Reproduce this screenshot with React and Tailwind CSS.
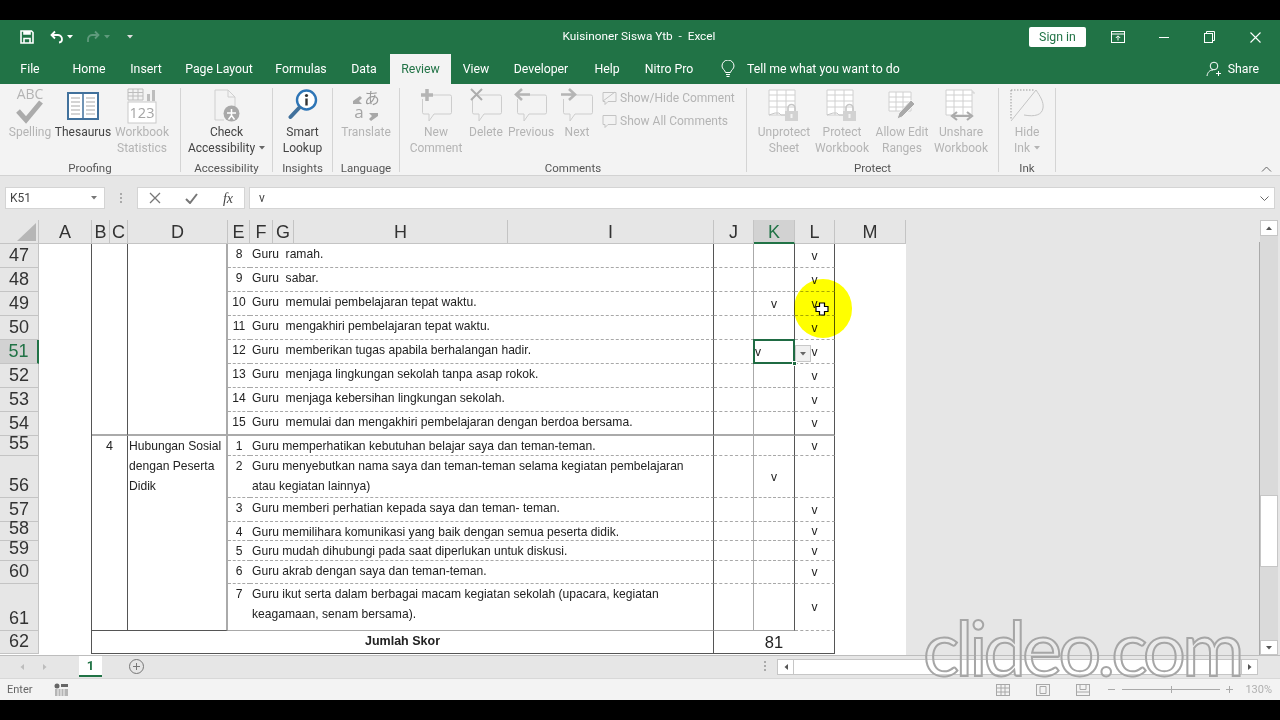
import React from "react";

const ribbonTabs = [
  { label: "File", w: "w-[60px]" },
  { label: "Home", w: "w-[58px]" },
  { label: "Insert", w: "w-[56px]" },
  { label: "Page Layout", w: "w-[90px]" },
  { label: "Formulas", w: "w-[74px]" },
  { label: "Data", w: "w-[52px]" },
  { label: "Review", w: "w-[61px]", active: true },
  { label: "View", w: "w-[50px]" },
  { label: "Developer", w: "w-[80px]" },
  { label: "Help", w: "w-[52px]" },
  { label: "Nitro Pro", w: "w-[72px]" },
];

const columns = [
  { label: "A" },
  { label: "B" },
  { label: "C" },
  { label: "D" },
  { label: "E" },
  { label: "F" },
  { label: "G" },
  { label: "H" },
  { label: "I" },
  { label: "J" },
  { label: "K", active: true },
  { label: "L" },
  { label: "M" },
];

const rows = [
  { n: 47, no: "8", text: "Guru  ramah.", l: true },
  { n: 48, no: "9", text: "Guru  sabar.", l: true },
  { n: 49, no: "10", text: "Guru  memulai pembelajaran tepat waktu.", k: true, l: true },
  { n: 50, no: "11", text: "Guru  mengakhiri pembelajaran tepat waktu.", l: true },
  { n: 51, no: "12", text: "Guru  memberikan tugas apabila berhalangan hadir.", l: true, selected: true },
  { n: 52, no: "13", text: "Guru  menjaga lingkungan sekolah tanpa asap rokok.", l: true },
  { n: 53, no: "14", text: "Guru  menjaga kebersihan lingkungan sekolah.", l: true },
  { n: 54, no: "15", text: "Guru  memulai dan mengakhiri pembelajaran dengan berdoa bersama.", l: true, groupEnd: true },
  { n: 55, no: "1", text: "Guru memperhatikan kebutuhan belajar saya dan teman-teman.", l: true },
  { n: 56, no: "2", text: "Guru menyebutkan nama saya dan teman-teman selama kegiatan pembelajaran\natau kegiatan lainnya)", k: true },
  { n: 57, no: "3", text: "Guru memberi perhatian kepada saya dan teman- teman.", l: true },
  { n: 58, no: "4", text: "Guru memilihara komunikasi yang baik dengan semua peserta didik.", l: true },
  { n: 59, no: "5", text: "Guru mudah dihubungi pada saat diperlukan untuk diskusi.", l: true },
  { n: 60, no: "6", text: "Guru akrab dengan saya dan teman-teman.", l: true },
  { n: 61, no: "7", text: "Guru ikut serta dalam berbagai macam kegiatan sekolah (upacara, kegiatan\nkeagamaan, senam bersama).", l: true, last: true },
];

// ---- small drawings ----
function SaveIcon() {
  return (
    <svg width="14" height="14" viewBox="0 0 14 14" fill="none" stroke="white" strokeWidth="1.6">
      <path d="M1 1h10.5L13 2.5V13H1z" />
      <path d="M4 13V8.5h6V13" />
      <path d="M4 1v3h6V1" fill="white" />
    </svg>
  );
}

function UndoIcon({ dim }) {
  return (
    <svg width="16" height="14" viewBox="0 0 16 14" fill="none" stroke={dim ? "#5f9a7c" : "white"} strokeWidth="1.8">
      {dim ? (
        <path d="M10 1.5l3.5 3.5L10 8.5M13 5H7a4.2 4.2 0 0 0-4 4.5V12" />
      ) : (
        <path d="M6 1.5L2.5 5 6 8.5M3 5h6a4.2 4.2 0 0 1 4 4.5c0 1.5-1.2 2.8-3 3" />
      )}
    </svg>
  );
}

function Caret({ color = "#ffffff" }) {
  return (
    <svg width="6" height="4" viewBox="0 0 6 4">
      <path d="M0 0h6L3 3.5z" fill={color} />
    </svg>
  );
}

function SpellingIcon() {
  return (
    <svg width="36" height="46" viewBox="0 -4 36 46" fill="none">
      <text x="18" y="12" textAnchor="middle" fontSize="14" fill="#b4b4b4" fontFamily="Open Sans, sans-serif">ABC</text>
      <path d="M6 24l8 9L29 15" stroke="#ababab" strokeWidth="5" />
    </svg>
  );
}

function ThesaurusIcon() {
  return (
    <svg width="32" height="28" viewBox="0 0 32 28" fill="none">
      <rect x="1" y="1" width="30" height="26" fill="#fff" stroke="#41719c" strokeWidth="2" />
      <path d="M16 1v26" stroke="#41719c" strokeWidth="1.5" />
      <path d="M4 6h9M4 10h9M4 14h9M4 18h9M4 22h9M19 6h9M19 10h9M19 14h9M19 18h9M19 22h9" stroke="#a9a9a9" />
    </svg>
  );
}

function StatsIcon() {
  return (
    <svg width="30" height="36" viewBox="0 0 30 36" fill="none">
      <path d="M1 1h15v11H1zM1 4.5h15M1 8h15M6 1v11M11 1v11" stroke="#bdbdbd" />
      <path d="M20 6h3v7h-3zM25 2h3v11h-3z" fill="#bdbdbd" />
      <rect x="1" y="14" width="28" height="21" fill="#fff" stroke="#c9c9c9" />
      <text x="15" y="30" textAnchor="middle" fontSize="14.5" fill="#a5a5a5" fontFamily="Open Sans, sans-serif">123</text>
    </svg>
  );
}

function CheckDocIcon() {
  return (
    <svg width="26" height="34" viewBox="0 0 26 34" fill="none">
      <path d="M1 1h13l7 7v10M14 1v7h7M1 1v30h9" stroke="#cfcfcf" />
      <circle cx="17.5" cy="24.5" r="8" fill="#a9a9a9" />
      <path d="M17.5 20v6.5M13 24h9M17.5 26.5l-3 4M17.5 26.5l3 4" stroke="#fff" strokeWidth="1.5" />
    </svg>
  );
}

function LookupIcon() {
  return (
    <svg width="30" height="36" viewBox="0 0 30 36" fill="none">
      <circle cx="18.5" cy="12" r="9.5" fill="#fff" stroke="#2e75b6" strokeWidth="2.4" />
      <path d="M11 20L2.5 29" stroke="#41719c" strokeWidth="4" strokeLinecap="round" />
      <circle cx="18.5" cy="7.5" r="1.6" fill="#333" />
      <path d="M18.5 10.5v7" stroke="#333" strokeWidth="2.4" />
    </svg>
  );
}

function TranslateIcon() {
  return (
    <svg width="30" height="46" viewBox="0 -6 30 46" fill="none">
      <path d="M2 12l7-5 2 2-3 3 3 3H2z" fill="#a8a8a8" />
      <text x="21" y="15" textAnchor="middle" fontSize="15.5" fill="#9c9c9c" fontFamily="Noto Sans CJK JP, sans-serif">あ</text>
      <text x="8" y="29" textAnchor="middle" fontSize="17" fill="#a5a5a5" fontFamily="Open Sans, sans-serif">a</text>
      <path d="M27 27l-7 5-2-2 3-3-3-3h9z" fill="#a8a8a8" />
    </svg>
  );
}

function BubbleIcon({ mark }) {
  return (
    <svg width="34" height="36" viewBox="0 0 34 36" fill="none">
      <path d="M8 7h23a1.5 1.5 0 0 1 1.5 1.5v16A1.5 1.5 0 0 1 31 26H15l-5 7v-7H5a1.5 1.5 0 0 1-1.5-1.5V11" stroke="#cdcdcd" />
      {mark === "new" && <path d="M8 1v12M2 7h12" stroke="#b5b5b5" strokeWidth="3.5" />}
      {mark === "delete" && <path d="M2 1l11 11M13 1L2 12" stroke="#adadad" strokeWidth="2" />}
      {mark === "prev" && <path d="M8 1L2 6.5 8 12M3 6.5h13" stroke="#b5b5b5" strokeWidth="2.6" />}
      {mark === "next" && <path d="M9 1l6 5.5L9 12M14 6.5H1" stroke="#b5b5b5" strokeWidth="2.6" />}
    </svg>
  );
}

function SmallBubble({ slash }) {
  return (
    <svg width="15" height="15" viewBox="0 0 15 15" fill="none">
      <path d="M1 1.5h13v9H6l-3 3v-3H1z" stroke="#c4c4c4" />
      {slash && <path d="M1 10L13 1" stroke="#c4c4c4" />}
    </svg>
  );
}

function SheetGrid({ small }) {
  return (
    <g stroke="#d0d0d0">
      <path d={small ? "M1 1h22v19H1z" : "M1 1h26v25H1z"} fill="#fff" />
      <path d={small ? "M1 6h22M1 11h22M1 16h22M8 1v19M15 1v19" : "M1 6h26M1 12h26M1 18h26M9 1v25M18 1v25"} />
    </g>
  );
}

function LockIcon({ x, y }) {
  return (
    <g transform={`translate(${x} ${y})`}>
      <path d="M3 7V4a3.5 3.5 0 0 1 7 0v3" stroke="#c6c6c6" strokeWidth="1.6" fill="none" />
      <rect x="0" y="7" width="13" height="10" fill="#d2d2d2" />
      <rect x="5.5" y="10" width="2" height="4" fill="#f3f3f3" />
    </g>
  );
}

function ProtectIcon() {
  return (
    <svg width="32" height="34" viewBox="0 0 32 34" fill="none">
      <SheetGrid />
      <path d="M1 26l6-2h4l2 2h6" stroke="#c6c6c6" />
      <LockIcon x={17} y={15} />
    </svg>
  );
}

function AllowEditIcon() {
  return (
    <svg width="28" height="30" viewBox="0 0 28 30" fill="none">
      <SheetGrid small />
      <path d="M9 28l2-6L23 9l4 4-13 13z" fill="#a9a9a9" stroke="#f3f3f3" />
    </svg>
  );
}

function UnshareIcon() {
  return (
    <svg width="32" height="34" viewBox="0 0 32 34" fill="none">
      <path d="M3 3h26v2" stroke="#d0d0d0" />
      <SheetGrid />
      <path d="M9 27h16M12 23l-5 4 5 4M22 23l5 4-5 4" stroke="#ababab" strokeWidth="2.2" />
    </svg>
  );
}

function InkIcon() {
  return (
    <svg width="34" height="34" viewBox="0 0 34 34" fill="none">
      <path d="M1 1h24M1 1v30" stroke="#999" strokeDasharray="1.5 1.5" />
      <path d="M1 32L26 1c4 6 8 12 7 18-1 7-8 9-19 7" stroke="#c4c4c4" />
    </svg>
  );
}

function CursorCross() {
  return (
    <svg width="14" height="14" viewBox="0 0 14 14">
      <path d="M4.5 1h5v3.5H13v5H9.5V13h-5V9.5H1v-5h3.5z" fill="#fff" stroke="#000" strokeWidth="1.2" />
    </svg>
  );
}

// ---- ribbon ----
function RibbonButton({ w, icon, lines, disabled, caret }) {
  return (
    <div className={`${w} flex flex-col items-center shrink-0`}>
      <div className="h-[36px] flex items-center justify-center">{icon}</div>
      <div className={`text-center leading-[16px] whitespace-nowrap ${disabled ? "text-[#b4b4b4]" : "text-[#444444]"}`}>
        {lines.map((line, i) => (
          <div key={i} className="flex items-center justify-center gap-1">
            {line}
            {caret && i === lines.length - 1 && <Caret color={disabled ? "#b4b4b4" : "#666666"} />}
          </div>
        ))}
      </div>
    </div>
  );
}

function RibbonGroup({ w, label, children, pad = "" }) {
  return (
    <div className={`${w} h-[84px] flex flex-col shrink-0 border-r border-[#d4d4d4]`}>
      <div className={`flex-1 flex ${pad}`}>{children}</div>
      <div className="text-center text-[11.5px] leading-[14px] text-[#555555] mb-[-3px]">{label}</div>
    </div>
  );
}

function Ribbon() {
  return (
    <div className="h-[92px] bg-[#f3f3f3] border-b border-[#d2d2d2] flex pt-[4px] text-[12px]">
      <RibbonGroup w="w-[181px]" label="Proofing" pad="pl-[4px]">
        <RibbonButton w="w-[52px]" icon={<SpellingIcon />} lines={["Spelling"]} disabled />
        <RibbonButton w="w-[54px]" icon={<ThesaurusIcon />} lines={["Thesaurus"]} />
        <RibbonButton w="w-[64px]" icon={<StatsIcon />} lines={["Workbook", "Statistics"]} disabled />
      </RibbonGroup>
      <RibbonGroup w="w-[92px]" label="Accessibility">
        <RibbonButton w="w-full" icon={<CheckDocIcon />} lines={["Check", "Accessibility"]} caret />
      </RibbonGroup>
      <RibbonGroup w="w-[60px]" label="Insights">
        <RibbonButton w="w-full" icon={<LookupIcon />} lines={["Smart", "Lookup"]} />
      </RibbonGroup>
      <RibbonGroup w="w-[67px]" label="Language">
        <RibbonButton w="w-full" icon={<TranslateIcon />} lines={["Translate"]} disabled />
      </RibbonGroup>
      <RibbonGroup w="w-[347px]" label="Comments" pad="pl-[10px]">
        <RibbonButton w="w-[52px]" icon={<BubbleIcon mark="new" />} lines={["New", "Comment"]} disabled />
        <RibbonButton w="w-[48px]" icon={<BubbleIcon mark="delete" />} lines={["Delete"]} disabled />
        <RibbonButton w="w-[42px]" icon={<BubbleIcon mark="prev" />} lines={["Previous"]} disabled />
        <RibbonButton w="w-[50px]" icon={<BubbleIcon mark="next" />} lines={["Next"]} disabled />
        <div className="flex flex-col gap-[7px] pt-[2px] text-[#b4b4b4] whitespace-nowrap leading-[16px]">
          <div className="flex items-center gap-[3px]"><SmallBubble slash />Show/Hide Comment</div>
          <div className="flex items-center gap-[3px]"><SmallBubble />Show All Comments</div>
        </div>
      </RibbonGroup>
      <RibbonGroup w="w-[252px]" label="Protect" pad="pl-[8px]">
        <RibbonButton w="w-[58px]" icon={<ProtectIcon />} lines={["Unprotect", "Sheet"]} disabled />
        <RibbonButton w="w-[58px]" icon={<ProtectIcon />} lines={["Protect", "Workbook"]} disabled />
        <RibbonButton w="w-[62px]" icon={<AllowEditIcon />} lines={["Allow Edit", "Ranges"]} disabled />
        <RibbonButton w="w-[56px]" icon={<UnshareIcon />} lines={["Unshare", "Workbook"]} disabled />
      </RibbonGroup>
      <RibbonGroup w="w-[57px]" label="Ink">
        <RibbonButton w="w-full" icon={<InkIcon />} lines={["Hide", "Ink"]} disabled caret />
      </RibbonGroup>
      <div className="flex-1 flex items-end justify-end pr-[8px] pb-[3px]">
        <svg width="11" height="6" viewBox="0 0 11 6" fill="none" stroke="#666666">
          <path d="M1 5.5l4.5-4.5 4.5 4.5" />
        </svg>
      </div>
    </div>
  );
}

// ---- sheet ----
const rowHeader = "bg-[#e6e6e6] border-r border-b border-[#c4c4c4] flex items-end justify-center text-[18px] leading-[23px] text-[#333333]";
const rowHeaderOn = "bg-[#d2d2d2] border-r-2 border-b border-r-[#217346] border-b-[#c4c4c4] flex items-end justify-center text-[18px] leading-[23px] text-[#217346]";
const dashed = "border-b border-r border-dashed border-b-[#a8a8a8] [border-right-style:solid]";

function Row({ row }) {
  const groupLine = row.groupEnd ? "border-b-2 border-b-[#aaaaaa] [border-bottom-style:solid]" : "";
  const solidBottom = row.last ? "border-b-[#555555] [border-bottom-style:solid]" : groupLine;
  return (
    <>
      <div className={row.selected ? rowHeaderOn : rowHeader}>{row.n}</div>
      <div className="bg-white border-r border-[#555555]" />
      {row.n === 47 && <div className="col-span-2 row-span-8 border-r border-b-2 border-r-[#555555] border-b-[#aaaaaa]" />}
      {row.n === 47 && <div className="row-span-8 border-r-2 border-b-2 border-r-[#aaaaaa] border-b-[#aaaaaa]" />}
      {row.n === 55 && (
        <div className="col-span-2 row-span-7 border-r border-b border-[#555555] flex justify-center text-[12.5px] leading-[20px]">4</div>
      )}
      {row.n === 55 && (
        <div className="row-span-7 border-r-2 border-b border-r-[#aaaaaa] border-b-[#555555] pl-px leading-[20px]">
          Hubungan Sosial
          <br />
          dengan Peserta
          <br />
          Didik
        </div>
      )}
      <div className={`border-b border-dashed border-b-[#a8a8a8] ${solidBottom} flex justify-center leading-[20px]`}>{row.no}</div>
      <div className={`col-span-4 border-b border-r border-dashed border-b-[#a8a8a8] border-r-[#555555] [border-right-style:solid] ${solidBottom} pl-[2px] leading-[20px] whitespace-pre`}>
        {row.text}
      </div>
      <div className={`${dashed} border-r-[#aaaaaa] ${solidBottom}`} />
      <div className={`${dashed} border-r-[#555555] ${solidBottom} relative flex items-center justify-center pt-px`}>
        {row.k && "v"}
        {row.selected && <ActiveCell />}
      </div>
      <div className={`${dashed} border-r-[#555555] ${groupLine} flex items-center justify-center pt-px`}>{row.l && "v"}</div>
      <div className="bg-white" />
    </>
  );
}

function ActiveCell() {
  return (
    <>
      <div className="absolute -left-px -top-px -right-px -bottom-px border-2 border-[#1f6b43] flex items-center pt-px z-10">v</div>
      <div className="absolute left-[41px] top-[5px] w-[16px] h-[17px] bg-[#f0f0f0] border border-[#c8c8c8] flex items-center justify-center z-10">
        <Caret color="#666666" />
      </div>
      <div className="absolute right-[-3px] bottom-[-3px] w-[5px] h-[5px] bg-[#1f6b43] border border-white z-20" />
    </>
  );
}

function Sheet() {
  return (
    <div className="relative w-[906px] h-[435px] bg-white shrink-0 font-['Liberation_Sans',sans-serif] text-[12.1px] text-[#222222]">
      <div className="grid grid-cols-[39px_53px_18px_18px_100px_22px_23px_21px_214px_206px_40px_41px_40px_71px] grid-rows-[24px_repeat(8,24px)_20px_42px_24px_19px_20px_23px_47px_23px]">
        <div className="bg-[#e6e6e6] border-r border-b border-[#c4c4c4] flex items-end justify-end pr-[2px] pb-[2px]">
          <svg width="19" height="18" viewBox="0 0 19 18">
            <path d="M19 0v18H0z" fill="#b6b6b6" />
          </svg>
        </div>
        {columns.map((c) => (
          <div
            key={c.label}
            className={
              c.active
                ? "bg-[#d2d2d2] border-r border-b-2 border-r-[#c4c4c4] border-b-[#217346] flex items-center justify-center pt-[2px] text-[18px] text-[#217346]"
                : "bg-[#e6e6e6] border-r border-b border-[#c4c4c4] flex items-center justify-center pt-[2px] text-[18px] text-[#333333]"
            }
          >
            {c.label}
          </div>
        ))}
        {rows.map((row) => (
          <Row key={row.n} row={row} />
        ))}
        <div className={rowHeader}>62</div>
        <div className="bg-white border-r border-[#555555]" />
        <div className="col-span-8 border-b border-r border-[#555555] flex items-center justify-center pb-[2px] text-[12.5px] font-bold">Jumlah Skor</div>
        <div className="col-span-3 border-b border-r border-[#555555] flex items-center justify-center text-[16.5px]">81</div>
        <div className="bg-white" />
      </div>
      {/* pointer highlight from the screen recorder */}
      <div className="absolute left-[794px] top-[59px] w-[58px] h-[59px] rounded-full bg-[#ffff00] mix-blend-multiply z-20" />
      <div className="absolute left-[815px] top-[82px] z-30">
        <CursorCross />
      </div>
    </div>
  );
}

function VerticalScrollbar() {
  return (
    <div className="w-[20px] h-[435px] bg-[#e6e6e6] flex flex-col pr-[2px] shrink-0">
      <div className="h-[16px] bg-white border border-[#c6c6c6] flex items-center justify-center">
        <span className="rotate-180 flex"><Caret color="#555555" /></span>
      </div>
      <div className="flex-1 bg-[#dadada] flex flex-col">
        <div className="h-[259px]" />
        <div className="h-[72px] bg-white border border-[#c6c6c6]" />
      </div>
      <div className="h-[15px] bg-white border border-[#c6c6c6] flex items-center justify-center">
        <Caret color="#555555" />
      </div>
    </div>
  );
}

function StatusIcon({ kind }) {
  return (
    <svg width="14" height="12" viewBox="0 0 14 12" fill="none" stroke="#a8a8a8">
      <rect x="0.5" y="0.5" width="13" height="11" />
      {kind === "grid" && <path d="M0.5 4h13M0.5 8h13M5 0.5v11M9 0.5v11" />}
      {kind === "page" && <path d="M4 2.5h6v7H4z" />}
      {kind === "break" && <path d="M4 0.5v5h6v-5M0.5 8h13" />}
    </svg>
  );
}

export default function App() {
  return (
    <div className="relative w-[1280px] h-[720px] overflow-hidden bg-black font-['Roboto',sans-serif] flex flex-col">
      <div className="h-[20px] shrink-0" />

      {/* title bar and tabs */}
      <div className="h-[64px] shrink-0 bg-[#217346] text-white">
        <div className="h-[34px] flex items-center text-[12.3px]">
          <div className="w-[533px] flex items-center pl-[20px] shrink-0">
            <SaveIcon />
            <span className="ml-[15px]"><UndoIcon /></span>
            <span className="ml-[2px]"><Caret /></span>
            <span className="ml-[12px]"><UndoIcon dim /></span>
            <span className="ml-[3px]"><Caret color="#5f9a7c" /></span>
            <span className="ml-[17px]"><Caret color="#dddddd" /></span>
          </div>
          <div className="w-[212px] text-center text-[11.8px] whitespace-pre shrink-0">Kuisinoner Siswa Ytb  -  Excel</div>
          <div className="w-[284px] shrink-0" />
          <div className="w-[57px] h-[20px] bg-white text-[#217346] rounded-[2px] flex items-center justify-center shrink-0">Sign in</div>
          <div className="w-[25px] shrink-0" />
          <svg width="14" height="12" viewBox="0 0 14 12" fill="none" stroke="white">
            <rect x="0.5" y="0.5" width="13" height="11" />
            <path d="M0.5 3h13" />
            <path d="M7 9.5V5M4.8 7L7 4.8 9.2 7" />
          </svg>
          <div className="w-[34px] shrink-0" />
          <div className="w-[10px] h-px bg-white shrink-0" />
          <div className="w-[35px] shrink-0" />
          <svg width="11" height="12" viewBox="0 0 11 12" fill="none" stroke="white">
            <rect x="0.5" y="2.5" width="8" height="9" />
            <path d="M2.5 2.5v-2h8v9h-2" />
          </svg>
          <div className="w-[35px] shrink-0" />
          <svg width="11" height="11" viewBox="0 0 11 11" fill="none" stroke="white" strokeWidth="1.1">
            <path d="M0.5 0.5l10 10M10.5 0.5l-10 10" />
          </svg>
        </div>
        <div className="h-[30px] flex items-stretch text-[12.3px]">
          {ribbonTabs.map((t) => (
            <div
              key={t.label}
              className={`${t.w} flex items-center justify-center shrink-0 ${t.active ? "bg-[#f3f3f3] text-[#217346]" : ""}`}
            >
              {t.label}
            </div>
          ))}
          <div className="w-[16px] shrink-0" />
          <div className="flex items-center">
            <svg width="14" height="18" viewBox="0 0 14 18" fill="none" stroke="white">
              <path d="M4.5 12.5C4 10 1 9 1 6a6 6 0 0 1 12 0c0 3-3 4-3.5 6.5zM5 14.5h4M5.5 16.5h3" />
            </svg>
          </div>
          <div className="flex items-center ml-[12px] whitespace-nowrap">Tell me what you want to do</div>
          <div className="flex-1" />
          <div className="flex items-center gap-[6px] pr-[21px]">
            <svg width="16" height="16" viewBox="0 0 16 16" fill="none" stroke="white">
              <circle cx="8" cy="5" r="3.8" />
              <path d="M1 15c.5-3.5 2.5-6 6-6M10 12.5h5M12.5 10v5" />
            </svg>
            Share
          </div>
        </div>
      </div>

      <Ribbon />

      {/* formula bar */}
      <div className="h-[44px] shrink-0 bg-[#e6e6e6] flex items-start pt-[11px] pl-[5px] pr-[5px] text-[12px] text-[#444444]">
        <div className="w-[100px] h-[22px] bg-white border border-[#d4d4d4] flex items-center justify-between pl-[4px] pr-[7px]">
          K51
          <Caret color="#777777" />
        </div>
        <div className="w-[32px] h-[22px] flex flex-col items-center justify-center gap-[2px]">
          <div className="w-[2px] h-[2px] bg-[#aaaaaa]" />
          <div className="w-[2px] h-[2px] bg-[#aaaaaa]" />
          <div className="w-[2px] h-[2px] bg-[#aaaaaa]" />
        </div>
        <div className="w-[108px] h-[22px] bg-white border border-[#d4d4d4] flex items-center justify-between px-[11px]">
          <svg width="12" height="12" viewBox="0 0 12 12" fill="none" stroke="#777777" strokeWidth="1.3">
            <path d="M1 1l10 10M11 1L1 11" />
          </svg>
          <svg width="13" height="11" viewBox="0 0 13 11" fill="none" stroke="#777777" strokeWidth="2">
            <path d="M1 6l4 4 7-9" />
          </svg>
          <span className="font-['Liberation_Serif',serif] italic text-[14px] text-[#444444]">fx</span>
        </div>
        <div className="w-[4px]" />
        <div className="flex-1 h-[22px] bg-white border border-[#d4d4d4] flex items-center pl-[9px] pr-[5px] justify-between">
          v
          <svg width="9" height="5" viewBox="0 0 9 5" fill="none" stroke="#666666">
            <path d="M0.5 0.5l4 4 4-4" />
          </svg>
        </div>
      </div>

      {/* sheet area */}
      <div className="h-[435px] shrink-0 flex bg-[#e6e6e6]">
        <Sheet />
        <div className="flex-1 pt-[22px]">
          <div className="h-full border-r border-[#aaaaaa]" />
        </div>
        <VerticalScrollbar />
      </div>

      {/* sheet tabs */}
      <div className="h-[23px] shrink-0 bg-[#e6e6e6] border-t border-[#bdbdbd] flex items-start">
        <div className="w-[79px] h-[22px] flex items-center gap-[17px] pl-[19px] shrink-0">
          <span className="rotate-90 flex"><Caret color="#bdbdbd" /></span>
          <span className="-rotate-90 flex"><Caret color="#bdbdbd" /></span>
        </div>
        <div className="w-[23px] h-[21px] bg-white border-b-2 border-[#217346] flex items-center justify-center font-bold text-[13px] text-[#217346] shrink-0">1</div>
        <div className="w-[27px] shrink-0" />
        <div className="w-[15px] h-[15px] mt-[3px] rounded-full border border-[#777777] flex items-center justify-center shrink-0">
          <svg width="9" height="9" viewBox="0 0 9 9" stroke="#777777"><path d="M4.5 1v7M1 4.5h7" /></svg>
        </div>
        <div className="w-[620px] shrink-0" />
        <div className="flex flex-col gap-[2px] mt-[5px] shrink-0">
          <div className="w-[2px] h-[2px] bg-[#aaaaaa]" />
          <div className="w-[2px] h-[2px] bg-[#aaaaaa]" />
          <div className="w-[2px] h-[2px] bg-[#aaaaaa]" />
        </div>
        <div className="w-[11px] shrink-0" />
        <div className="w-[481px] h-[16px] mt-[3px] flex bg-white border border-[#c6c6c6] shrink-0">
          <div className="w-[16px] border-r border-[#c6c6c6] flex items-center justify-center">
            <span className="rotate-90 flex"><Caret color="#555555" /></span>
          </div>
          <div className="flex-1" />
          <div className="w-[16px] border-l border-[#c6c6c6] flex items-center justify-center">
            <span className="-rotate-90 flex"><Caret color="#555555" /></span>
          </div>
        </div>
      </div>

      {/* status bar */}
      <div className="h-[22px] shrink-0 bg-[#f3f3f3] border-t border-[#d8d8d8] flex items-center text-[11px] text-[#666666]">
        <div className="w-[54px] pl-[7px] pt-px shrink-0">Enter</div>
        <svg width="14" height="13" viewBox="0 0 14 13" fill="none">
          <circle cx="3" cy="3" r="2.5" fill="#666666" />
          <path d="M7 1h7v3H7z" fill="#666666" />
          <path d="M1 6h13v7H1z" fill="#b5b5b5" />
          <path d="M4 6v7M7 6v7M10 6v7" stroke="#f3f3f3" />
        </svg>
        <div className="flex-1" />
        <StatusIcon kind="grid" />
        <div className="w-[26px] shrink-0" />
        <StatusIcon kind="page" />
        <div className="w-[26px] shrink-0" />
        <StatusIcon kind="break" />
        <div className="w-[18px] shrink-0" />
        <div className="w-[7px] h-px bg-[#aaaaaa] shrink-0" />
        <div className="w-[98px] h-px bg-[#aaaaaa] ml-[7px] mr-[5px] relative shrink-0">
          <div className="absolute left-[49px] top-[-3px] w-px h-[7px] bg-[#aaaaaa]" />
        </div>
        <svg width="9" height="9" viewBox="0 0 9 9" stroke="#aaaaaa"><path d="M4.5 1v7M1 4.5h7" /></svg>
        <div className="w-[2px] shrink-0" />
        <div className="w-[44px] text-right pr-[8px] pt-px text-[#b0b0b0] shrink-0">130%</div>
      </div>

      <div className="h-[20px] shrink-0" />

      {/* video watermark */}
      <div className="absolute left-[923px] top-[602px] text-[76px] leading-[90px] font-['Lato',sans-serif] font-normal tracking-[-4px] text-white/20 [-webkit-text-stroke:2px_#a6a6a6] whitespace-nowrap z-40">
        clideo.com
      </div>
    </div>
  );
}
